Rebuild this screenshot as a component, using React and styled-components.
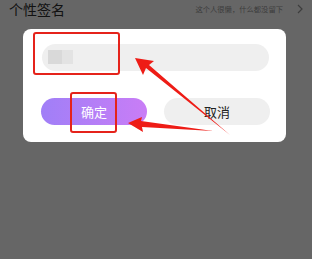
import React from "react";
import styled, { createGlobalStyle } from "styled-components";

const Global = createGlobalStyle`
  html, body { margin: 0; padding: 0; background: #fff; }
  body { font-family: "Noto Sans CJK SC", "Noto Sans", sans-serif; }
  * { box-sizing: border-box; }
`;

const Page = styled.div`
  position: relative;
  width: 312px;
  height: 259px;
  overflow: hidden;
  background: #fff;
`;

const SettingRow = styled.div`
  display: flex;
  align-items: center;
  height: 20px;
  padding: 0 8px 0 9px;
  margin-top: -1px;
`;

const RowTitle = styled.span`
  font-size: 14px;
  color: #2f2f2f;
  line-height: 20px;
`;

const RowValue = styled.span`
  margin-left: auto;
  font-size: 7.3px;
  color: #999;
  line-height: 20px;
  white-space: nowrap;
`;

const Chevron = styled.svg`
  width: 8px;
  height: 10px;
  margin-left: 13px;
  flex: none;
`;

const Overlay = styled.div`
  position: absolute;
  inset: 0;
  background: rgba(0, 0, 0, 0.6);
  padding: 29px 26px 0 23px;
`;

const Dialog = styled.div`
  width: 263px;
  height: 113px;
  background: #fff;
  border-radius: 8px;
  padding: 15px 16px 17px 18px;
  display: flex;
  flex-direction: column;
`;

const InputPill = styled.div`
  height: 27px;
  margin: 0 1px 0 1px;
  border-radius: 14px;
  background: #efefef;
  display: flex;
  align-items: center;
  padding-left: 6px;
`;

const Mosaic = styled.div`
  display: flex;
  height: 14px;
  margin-top: -1px;
`;

const Tile = styled.span`
  width: ${(p) => p.$w}px;
  height: 100%;
  background: ${(p) => p.$c};
`;

const Buttons = styled.div`
  display: flex;
  gap: 17px;
  margin-top: 27px;
`;

const Button = styled.button`
  flex: 1;
  height: 27px;
  border: none;
  border-radius: 14px;
  padding: 0;
  font-family: "Noto Sans CJK SC", sans-serif;
  font-size: 13px;
  line-height: 27px;
  color: ${(p) => (p.$primary ? "#fff" : "#222")};
  background: ${(p) =>
    p.$primary ? "linear-gradient(90deg, #a07ff7 0%, #c97df6 100%)" : "#efefef"};
`;

const Annotations = styled.svg`
  position: absolute;
  left: 0;
  top: 0;
  width: 312px;
  height: 259px;
  pointer-events: none;
`;

export default function App() {
  return (
    <Page>
      <Global />
      <SettingRow>
        <RowTitle>个性签名</RowTitle>
        <RowValue>这个人很懒，什么都没留下</RowValue>
        <Chevron viewBox="0 0 8 10">
          <path d="M2 1 L6 5 L2 9" fill="none" stroke="#999" strokeWidth="1.2" />
        </Chevron>
      </SettingRow>
      <Overlay>
        <Dialog>
          <InputPill>
            <Mosaic>
              <Tile $w={14} $c="#d9d9d9" />
              <Tile $w={11} $c="#e3e3e3" />
            </Mosaic>
          </InputPill>
          <Buttons>
            <Button $primary>确定</Button>
            <Button>取消</Button>
          </Buttons>
        </Dialog>
      </Overlay>
      <Annotations viewBox="0 0 312 259">
        <rect x="34" y="33" width="85" height="41" rx="2" fill="none" stroke="#e5231b" strokeWidth="2" />
        <rect x="71" y="93" width="45" height="39" rx="2" fill="none" stroke="#e5231b" strokeWidth="2" />
        <polygon points="135,58 154,61 149,65 230,135 146,68 143,75" fill="#ee1c16" />
        <polygon points="128,123 142,117 141,121 213,131 142,127 143,132" fill="#ee1c16" />
      </Annotations>
    </Page>
  );
}
